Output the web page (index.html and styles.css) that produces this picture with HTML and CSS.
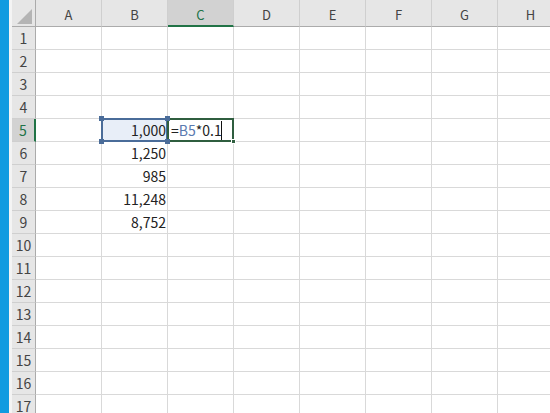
FILE: index.html
```html
<!DOCTYPE html>
<html lang="ja">
<head>
<meta charset="utf-8">
<link rel="stylesheet" href="styles.css">
</head>
<body>
<div class="app">
  <div class="stripe"></div>
  <div class="gap"></div>
  <div class="sheet">
    <div class="corner"><span class="tri"></span></div>
    <div class="ch">A</div><div class="ch">B</div><div class="ch sel">C</div><div class="ch">D</div><div class="ch">E</div><div class="ch">F</div><div class="ch">G</div><div class="ch">H</div>

    <div class="rh">1</div><div class="c"></div><div class="c"></div><div class="c"></div><div class="c"></div><div class="c"></div><div class="c"></div><div class="c"></div><div class="c"></div>
    <div class="rh">2</div><div class="c"></div><div class="c"></div><div class="c"></div><div class="c"></div><div class="c"></div><div class="c"></div><div class="c"></div><div class="c"></div>
    <div class="rh">3</div><div class="c"></div><div class="c"></div><div class="c"></div><div class="c"></div><div class="c"></div><div class="c"></div><div class="c"></div><div class="c"></div>
    <div class="rh">4</div><div class="c"></div><div class="c"></div><div class="c"></div><div class="c"></div><div class="c"></div><div class="c"></div><div class="c"></div><div class="c"></div>
    <div class="rh sel">5</div><div class="c"></div><div class="c num ref">1,000<span class="hd tl"></span><span class="hd tr"></span><span class="hd bl"></span><span class="hd br"></span></div><div class="c active"><span class="eq">=</span><span class="refname">B5</span>*0.1<span class="caret"></span><span class="fill"></span></div><div class="c"></div><div class="c"></div><div class="c"></div><div class="c"></div><div class="c"></div>
    <div class="rh">6</div><div class="c"></div><div class="c num">1,250</div><div class="c"></div><div class="c"></div><div class="c"></div><div class="c"></div><div class="c"></div><div class="c"></div>
    <div class="rh">7</div><div class="c"></div><div class="c num">985</div><div class="c"></div><div class="c"></div><div class="c"></div><div class="c"></div><div class="c"></div><div class="c"></div>
    <div class="rh">8</div><div class="c"></div><div class="c num">11,248</div><div class="c"></div><div class="c"></div><div class="c"></div><div class="c"></div><div class="c"></div><div class="c"></div>
    <div class="rh">9</div><div class="c"></div><div class="c num">8,752</div><div class="c"></div><div class="c"></div><div class="c"></div><div class="c"></div><div class="c"></div><div class="c"></div>
    <div class="rh">10</div><div class="c"></div><div class="c"></div><div class="c"></div><div class="c"></div><div class="c"></div><div class="c"></div><div class="c"></div><div class="c"></div>
    <div class="rh">11</div><div class="c"></div><div class="c"></div><div class="c"></div><div class="c"></div><div class="c"></div><div class="c"></div><div class="c"></div><div class="c"></div>
    <div class="rh">12</div><div class="c"></div><div class="c"></div><div class="c"></div><div class="c"></div><div class="c"></div><div class="c"></div><div class="c"></div><div class="c"></div>
    <div class="rh">13</div><div class="c"></div><div class="c"></div><div class="c"></div><div class="c"></div><div class="c"></div><div class="c"></div><div class="c"></div><div class="c"></div>
    <div class="rh">14</div><div class="c"></div><div class="c"></div><div class="c"></div><div class="c"></div><div class="c"></div><div class="c"></div><div class="c"></div><div class="c"></div>
    <div class="rh">15</div><div class="c"></div><div class="c"></div><div class="c"></div><div class="c"></div><div class="c"></div><div class="c"></div><div class="c"></div><div class="c"></div>
    <div class="rh">16</div><div class="c"></div><div class="c"></div><div class="c"></div><div class="c"></div><div class="c"></div><div class="c"></div><div class="c"></div><div class="c"></div>
    <div class="rh">17</div><div class="c"></div><div class="c"></div><div class="c"></div><div class="c"></div><div class="c"></div><div class="c"></div><div class="c"></div><div class="c"></div>
  </div>
</div>
</body>
</html>
```

FILE: styles.css
```css
html, body {
  margin: 0;
  padding: 0;
  background: #ffffff;
}
.app {
  display: flex;
  width: 550px;
  height: 413px;
  overflow: hidden;
  font-family: "Noto Sans CJK JP", "Noto Sans", "Liberation Sans", sans-serif;
}
.stripe {
  width: 9px;
  flex: none;
  background: #119be0;
}
.gap {
  width: 3px;
  flex: none;
  background: #f4f4f4;
}
.sheet {
  flex: none;
  display: grid;
  grid-template-columns: 24px repeat(8, 66px);
  grid-template-rows: 27px;
  grid-auto-rows: 23px;
}
.sheet > div {
  box-sizing: border-box;
}
.corner {
  background: #e6e6e6;
  border-right: 1px solid #ababab;
  border-bottom: 1px solid #ababab;
  position: relative;
}
.tri {
  position: absolute;
  right: 3px;
  bottom: 2px;
  width: 0;
  height: 0;
  border-left: 15px solid transparent;
  border-bottom: 15px solid #b4b4b4;
}
.ch {
  background: #e6e6e6;
  border-right: 1px solid #cfcfcf;
  border-bottom: 1px solid #ababab;
  color: #444;
  font-size: 13px;
  text-align: center;
  line-height: 27px;
  padding-top: 1px;
}
.ch.sel {
  background: #d2d2d2;
  border-bottom: 2px solid #217346;
  color: #217346;
}
.rh {
  background: #e6e6e6;
  border-right: 1px solid #ababab;
  border-bottom: 1px solid #cfcfcf;
  color: #444;
  font-size: 14px;
  text-align: center;
  line-height: 22px;
}
.rh.sel {
  background: #d2d2d2;
  border-right: 2px solid #217346;
  color: #217346;
}
.c {
  border-right: 1px solid #d9d9d9;
  border-bottom: 1px solid #d9d9d9;
  font-size: 14px;
  line-height: 22px;
  color: #222;
  white-space: nowrap;
}
.num {
  text-align: right;
  padding-right: 1px;
}
.ref {
  position: relative;
  background: #e8eef8;
}
.ref::after {
  content: "";
  position: absolute;
  left: -1px;
  top: -1px;
  right: -1px;
  bottom: -1px;
  border: 2px solid #4a6c99;
  pointer-events: none;
}
.hd {
  position: absolute;
  width: 5px;
  height: 5px;
  background: #4a6c99;
  z-index: 2;
}
.hd.tl { left: -3px; top: -3px; }
.hd.tr { right: -3px; top: -3px; }
.hd.bl { left: -3px; bottom: -3px; }
.hd.br { right: -3px; bottom: -3px; }
.active {
  position: relative;
  padding-left: 3px;
}
.active::after {
  content: "";
  position: absolute;
  left: -1px;
  top: -1px;
  right: -1px;
  bottom: -1px;
  border: 2px solid #2f5e3f;
  pointer-events: none;
}
.refname {
  color: #5a7ab0;
}
.caret {
  position: absolute;
  left: 53px;
  top: 2px;
  width: 1px;
  height: 19px;
  background: #111;
}
.fill {
  position: absolute;
  right: -3px;
  bottom: -3px;
  width: 5px;
  height: 5px;
  background: #2f5e3f;
  border: 1px solid #fff;
  box-sizing: border-box;
  z-index: 3;
}
```
